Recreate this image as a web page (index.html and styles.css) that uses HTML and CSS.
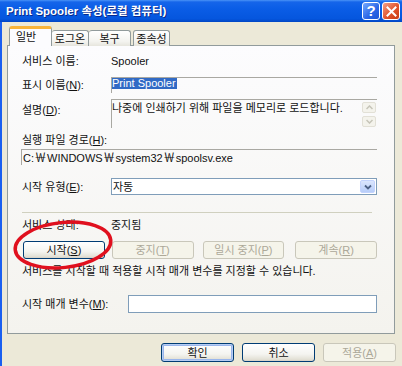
FILE: index.html
```html
<!DOCTYPE html>
<html lang="ko">
<head>
<meta charset="utf-8">
<link rel="stylesheet" href="styles.css">
</head>
<body>
<div class="window">
  <div class="titlebar">
    <span class="title">Print Spooler 속성(로컬 컴퓨터)</span>
    <div class="tb-btns">
      <span class="tb-btn help">?</span>
      <span class="tb-btn close">
        <svg width="11" height="11" viewBox="0 0 11 11"><path d="M1.5 1.5 L9.5 9.5 M9.5 1.5 L1.5 9.5" stroke="#fff" stroke-width="2" stroke-linecap="square"/></svg>
      </span>
    </div>
  </div>
  <div class="frame">
    <div class="tabs">
      <div class="tab active">일반</div>
      <div class="tab t2">로그온</div>
      <div class="tab t3">복구</div>
      <div class="tab t4">종속성</div>
    </div>
    <div class="panel">
      <div class="row r1"><span class="label">서비스 이름:</span><span>Spooler</span></div>
      <div class="row r2"><span class="label">표시 이름(<u>N</u>):</span><div class="ro-field"><span class="sel">Print Spooler</span></div></div>
      <div class="row r3"><span class="label">설명(<u>D</u>):</span>
        <div class="ro-field memo">
          <span class="memo-text">나중에 인쇄하기 위해 파일을 메모리로 로드합니다.</span>
          <div class="vscroll">
            <span class="sbtn"><svg width="7" height="5" viewBox="0 0 7 5"><path d="M0.5 4 L3.5 1 L6.5 4" fill="none" stroke="#c6c4b8" stroke-width="1.5"/></svg></span>
            <span class="sbtn"><svg width="7" height="5" viewBox="0 0 7 5"><path d="M0.5 1 L3.5 4 L6.5 1" fill="none" stroke="#c6c4b8" stroke-width="1.5"/></svg></span>
          </div>
        </div>
      </div>
      <div class="line r4">실행 파일 경로(<u>H</u>):</div>
      <div class="ro-field path">C:<span class="won">￦</span>WINDOWS<span class="won">￦</span>system32<span class="won">￦</span>spoolsv.exe</div>
      <div class="row r6"><span class="label">시작 유형(<u>E</u>):</span>
        <div class="combo"><span>자동</span>
          <span class="ddbtn"><svg width="8" height="6" viewBox="0 0 8 6"><path d="M1 1.5 L4 4.5 L7 1.5" fill="none" stroke="#4d6185" stroke-width="1.8"/></svg></span>
        </div>
      </div>
      <div class="sep"></div>
      <div class="row r7"><span class="label">서비스 상태:</span><span>중지됨</span></div>
      <div class="btnrow">
        <button class="btn">시작(<u>S</u>)</button>
        <button class="btn disabled">중지(<u>T</u>)</button>
        <button class="btn disabled">일시 중지(<u>P</u>)</button>
        <button class="btn disabled">계속(<u>R</u>)</button>
      </div>
      <div class="line caption">서비스를 시작할 때 적용할 시작 매개 변수를 지정할 수 있습니다.</div>
      <div class="row r8"><span class="label wide">시작 매개 변수(<u>M</u>):</span><div class="edit"></div></div>
    </div>
    <div class="footer">
      <button class="btn fbtn default">확인</button>
      <button class="btn fbtn">취소</button>
      <button class="btn fbtn disabled">적용(<u>A</u>)</button>
    </div>
  </div>
  <svg class="mark" width="402" height="366" viewBox="0 0 402 366">
    <ellipse cx="63" cy="245" rx="48" ry="22.5" transform="rotate(-6 63 245)" fill="none" stroke="#e0101e" stroke-width="3.5"/>
  </svg>
</div>
</body>
</html>
```

FILE: styles.css
```css
* { box-sizing: border-box; }
body {
  margin: 0;
  font-family: "Liberation Sans", "Noto Sans CJK KR", sans-serif;
  font-size: 11px;
  color: #111;
}
u { text-decoration: underline; text-underline-offset: 1px; }
.window {
  position: relative;
  width: 402px;
  height: 366px;
  background: #ece9d8;
  display: flex;
  flex-direction: column;
  overflow: hidden;
}
.titlebar {
  height: 22px;
  flex: none;
  background: linear-gradient(to bottom, #4a93f7 0, #1565ea 2px, #0a5de6 40%, #0556de 85%, #0046c4 100%);
  display: flex;
  align-items: center;
  justify-content: space-between;
  padding: 0 2px 0 6px;
}
.title {
  color: #fff;
  font-family: "Liberation Sans", "Noto Sans CJK KR", sans-serif;
  font-weight: bold;
  font-size: 11.5px;
  line-height: 22px;
  text-shadow: 1px 1px 0 #0a2a8c;
}
.tb-btns { display: flex; gap: 2px; }
.tb-btn {
  width: 18px;
  height: 18px;
  border: 1px solid #fff;
  border-radius: 3px;
  display: flex;
  align-items: center;
  justify-content: center;
}
.help {
  background: linear-gradient(135deg, #74a8ff, #2a66e6 60%, #1d55d6);
  color: #fff;
  font-family: "Liberation Sans", sans-serif;
  font-weight: bold;
  font-size: 15px;
  line-height: 16px;
}
.close { background: linear-gradient(135deg, #f4a08a, #e0542c 55%, #c83c14); }
.frame {
  flex: 1;
  border-left: 2px solid #1a5ff0;
  padding: 5px 7px 0 5px;
  display: flex;
  flex-direction: column;
}
.tabs {
  height: 19px;
  display: flex;
  align-items: flex-end;
  padding-left: 2px;
  position: relative;
  z-index: 2;
  margin-bottom: -1px;
}
.tab {
  height: 16px;
  border: 1px solid #919b9c;
  border-bottom: none;
  border-radius: 3px 3px 0 0;
  background: linear-gradient(to bottom, #ffffff, #f3f3ef 70%, #e6e5dd);
  display: flex;
  align-items: center;
  justify-content: center;
  line-height: 14px;
}
.tab.active {
  width: 43px;
  height: 20px;
  background: #fcfcfe;
  border-top: 3px solid #f8b43a;
  padding-bottom: 1px;
  justify-content: flex-start;
  padding-left: 6px;
}
.t2 { width: 37px; border-left: none; }
.t3 { width: 42px; border-left: none; }
.t4 { width: 37px; margin-left: 2px; }
.panel {
  height: 289px;
  flex: none;
  border: 1px solid #919b9c;
  background: linear-gradient(to bottom, #fcfcfe, #f4f3ee);
  padding: 8px 17px 0 14px;
  display: flex;
  flex-direction: column;
}
.row { display: flex; align-items: center; line-height: 14px; }
.label { width: 89px; flex: none; }
.label.wide { width: 106px; }
.line { line-height: 14px; height: 14px; }
.r1 { height: 14px; }
.r2 { height: 16px; margin-top: 9px; }
.ro-field {
  flex: 1;
  height: 100%;
  border-top: 1px solid #a9a8a2;
  border-left: 1px solid #a9a8a2;
}
.r2 .ro-field { line-height: 11px; }
.sel {
  display: inline-block;
  background: #316ac5;
  color: #fff;
  line-height: 11px;
  height: 11px;
  padding-right: 1px;
}
.r3 { height: 29px; margin-top: 6px; align-items: flex-start; }
.r3 .label { padding-top: 4px; }
.memo { display: flex; justify-content: space-between; }
.memo-text { padding-top: 1px; line-height: 14px; }
.vscroll {
  width: 15px;
  display: flex;
  flex-direction: column;
  gap: 3px;
  padding-top: 2px;
}
.sbtn {
  width: 14px;
  height: 11px;
  border: 1px solid #e2e0d6;
  border-radius: 2px;
  background: #f4f3ec;
  display: flex;
  align-items: center;
  justify-content: center;
}
.r4 { margin-top: 5px; }
.path {
  flex: none;
  height: 16px;
  margin-top: 2px;
  margin-left: -1px;
  padding-left: 1px;
  line-height: 15px;
}
.won {
  display: inline-block;
  width: 13px;
  text-align: center;
  font-family: "Noto Sans CJK KR", sans-serif;
  font-size: 12px;
  line-height: 14px;
}
.r6 { height: 17px; margin-top: 13px; }
.combo {
  flex: 1;
  height: 17px;
  background: #fff;
  border: 1px solid #7f9db9;
  display: flex;
  align-items: center;
  justify-content: space-between;
  padding: 0 1px 0 1px;
  line-height: 14px;
}
.ddbtn {
  width: 15px;
  height: 13px;
  border-radius: 2px;
  background: linear-gradient(to bottom, #dbe6fd, #b7cdf9);
  border: 1px solid #c3d3fd;
  display: flex;
  align-items: center;
  justify-content: center;
}
.sep {
  height: 1px;
  width: 350px;
  background: #d0d0bf;
  margin-top: 17px;
  flex: none;
}
.r7 { height: 14px; margin-top: 5px; }
.btnrow {
  display: flex;
  gap: 7px;
  margin-top: 9px;
  margin-left: 1px;
}
.btn {
  font-family: inherit;
  font-size: 11px;
  color: #111;
  width: 82px;
  height: 18px;
  padding: 0;
  line-height: 14px;
  border: 1px solid #003c74;
  border-radius: 3px;
  background: linear-gradient(to bottom, #ffffff, #f4f4f0 60%, #e3e1d6 90%, #d6d0c5);
}
.btn.disabled {
  color: #aca899;
  border-color: #c9c7ba;
  background: #f5f4ea;
}
.btnrow .btn:nth-child(3) { margin-left: 2px; }
.btnrow .btn:nth-child(4) { margin-left: 4px; }
.caption { margin-top: 5px; }
.r8 { height: 18px; margin-top: 17px; }
.edit {
  flex: 1;
  height: 18px;
  background: #fff;
  border: 1px solid #7f9db9;
}
.footer {
  display: flex;
  justify-content: flex-end;
  gap: 8px;
  margin-top: 9px;
  margin-right: -1px;
}
.fbtn { width: 73px; height: 19px; }
.fbtn.default { box-shadow: inset 0 0 0 1px #b6cdf3, inset 0 0 0 2px #9ab6ec; }
.mark { position: absolute; left: 0; top: 0; pointer-events: none; }
```
